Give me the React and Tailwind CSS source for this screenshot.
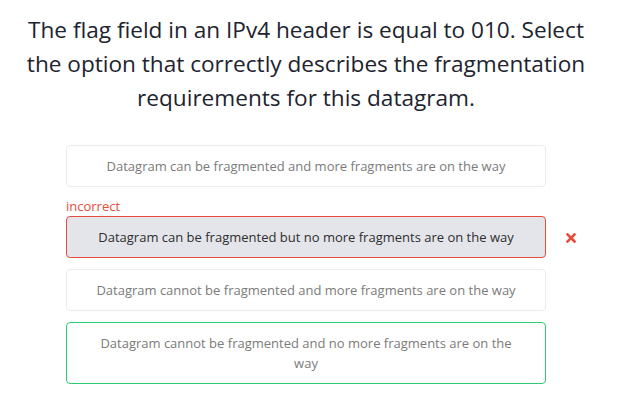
import React from "react";

const options = [
  { text: "Datagram can be fragmented and more fragments are on the way", state: "idle" },
  { text: "Datagram can be fragmented but no more fragments are on the way", state: "wrong" },
  { text: "Datagram cannot be fragmented and more fragments are on the way", state: "idle" },
  { text: "Datagram cannot be fragmented and no more fragments are on the way", state: "right" },
];

const Option = ({ text, state }) => {
  const styles = {
    idle: "border-[#ececec] bg-white text-[#7b7b7b]",
    wrong: "border-[#e74c3c] bg-[#e4e5ea] text-[#2e2e2e]",
    right: "border-[#2ecc71] bg-white text-[#7b7b7b]",
  };
  return (
    <div className="relative">
      {state === "wrong" && (
        <div className="text-[13px] leading-[16px] text-[#e74c3c] mb-[2px]">incorrect</div>
      )}
      <div
        className={`border rounded-[4px] px-7 py-[10px] text-center text-[13px] leading-[20px] ${styles[state]}`}
      >
        {text}
      </div>
      {state === "wrong" && (
        <svg
          className="absolute left-[500px] bottom-[15px]"
          width="10"
          height="10"
          viewBox="0 0 10 10"
        >
          <path d="M1.5 1.5 L8.5 8.5 M8.5 1.5 L1.5 8.5" stroke="#e74c3c" strokeWidth="2.6" strokeLinecap="square" />
        </svg>
      )}
    </div>
  );
};

export default function App() {
  return (
    <div className="w-[632px] h-[401px] bg-white pt-[13px]" style={{ fontFamily: "'Open Sans', 'Noto Sans', sans-serif" }}>
      <div className="w-[612px] flex flex-col items-center">
        <h1 className="text-center text-[22.6px] leading-[34px] text-[#21232f] font-normal">
          The flag field in an IPv4 header is equal to 010. Select
          <br />
          the option that correctly describes the fragmentation
          <br />
          requirements for this datagram.
        </h1>
        <div className="w-[480px] mt-[30px] flex flex-col gap-[11px]">
          {options.map((o, i) => (
            <Option key={i} {...o} />
          ))}
        </div>
      </div>
    </div>
  );
}
